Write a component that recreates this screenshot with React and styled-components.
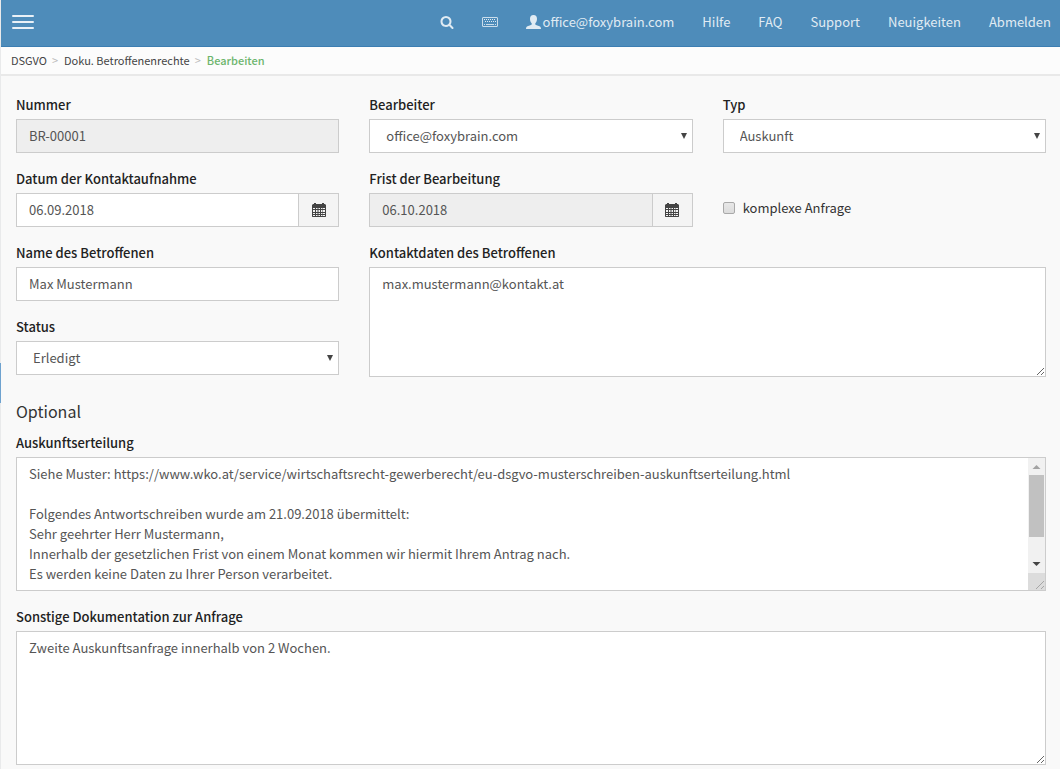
import React, { useLayoutEffect, useRef, useState } from 'react';
import styled, { createGlobalStyle } from 'styled-components';

const auskunft = `Siehe Muster: https://www.wko.at/service/wirtschaftsrecht-gewerberecht/eu-dsgvo-musterschreiben-auskunftserteilung.html

Folgendes Antwortschreiben wurde am 21.09.2018 übermittelt:
Sehr geehrter Herr Mustermann,
Innerhalb der gesetzlichen Frist von einem Monat kommen wir hiermit Ihrem Antrag nach.
Es werden keine Daten zu Ihrer Person verarbeitet.

`;

export default function App() {
    return (
        <>
        <GlobalStyle />
        <Page>
            <Rail><RailHandle /></Rail>
            <Content>
                <Navbar>
                    <MenuButton type="button" aria-label="Menü">
                        <Bar /><Bar /><Bar />
                    </MenuButton>
                    <Links>
                        <NavLink href="#suche" aria-label="Suche"><SearchIcon /></NavLink>
                        <NavLink href="#tastatur" aria-label="Tastatur"><KeyboardIcon /></NavLink>
                        <NavLink href="#profil"><UserIcon />office@foxybrain.com</NavLink>
                        <NavLink href="#hilfe">Hilfe</NavLink>
                        <NavLink href="#faq">FAQ</NavLink>
                        <NavLink href="#support">Support</NavLink>
                        <NavLink href="#neuigkeiten">Neuigkeiten</NavLink>
                        <NavLink href="#abmelden">Abmelden</NavLink>
                    </Links>
                </Navbar>
                <Breadcrumb aria-label="Breadcrumb">
                    <Crumb href="#dsgvo">DSGVO</Crumb>
                    <Separator>&gt;</Separator>
                    <Crumb href="#doku">Doku. Betroffenenrechte</Crumb>
                    <Separator>&gt;</Separator>
                    <Current>Bearbeiten</Current>
                </Breadcrumb>
                <Form>
                    <Row>
                        <Field>
                            <Label htmlFor="nummer">Nummer</Label>
                            <Input id="nummer" defaultValue="BR-00001" readOnly />
                        </Field>
                        <Field>
                            <Label htmlFor="bearbeiter">Bearbeiter</Label>
                            <Dropdown id="bearbeiter" options={['office@foxybrain.com']} />
                        </Field>
                        <Field>
                            <Label htmlFor="typ">Typ</Label>
                            <Dropdown id="typ" options={['Auskunft']} />
                        </Field>
                        <Field>
                            <Label htmlFor="datum">Datum der Kontaktaufnahme</Label>
                            <DateInput id="datum" defaultValue="06.09.2018" />
                        </Field>
                        <Field>
                            <Label htmlFor="frist">Frist der Bearbeitung</Label>
                            <DateInput id="frist" defaultValue="06.10.2018" readOnly />
                        </Field>
                        <CheckLabel>
                            <Checkbox type="checkbox" />
                            komplexe Anfrage
                        </CheckLabel>
                        <Stack>
                            <Field>
                                <Label htmlFor="name">Name des Betroffenen</Label>
                                <Input id="name" defaultValue="Max Mustermann" />
                            </Field>
                            <Field>
                                <Label htmlFor="status">Status</Label>
                                <Dropdown id="status" options={['Erledigt']} />
                            </Field>
                        </Stack>
                        <WideField>
                            <Label htmlFor="kontakt">Kontaktdaten des Betroffenen</Label>
                            <TextArea id="kontakt" $height={110} defaultValue="max.mustermann@kontakt.at" />
                        </WideField>
                    </Row>
                    <Heading>Optional</Heading>
                    <Stack>
                        <Field>
                            <Label htmlFor="auskunft">Auskunftserteilung</Label>
                            <ScrollArea id="auskunft" defaultValue={auskunft} />
                        </Field>
                        <Field>
                            <Label htmlFor="sonstige">Sonstige Dokumentation zur Anfrage</Label>
                            <TextArea id="sonstige" $height={134} defaultValue="Zweite Auskunftsanfrage innerhalb von 2 Wochen." />
                        </Field>
                    </Stack>
                </Form>
            </Content>
        </Page>
        </>
    )
}

function Dropdown({ id, options }) {
    return (
        <SelectWrap>
            <Select id={id}>
                {options.map((o) => <option key={o}>{o}</option>)}
            </Select>
            <Caret viewBox="0 0 6 6" aria-hidden="true"><path d="M0 0h6L3 6z" fill="#444" /></Caret>
        </SelectWrap>
    )
}

function DateInput(props) {
    return (
        <Group>
            <Input {...props} />
            <Addon type="button" aria-label="Kalender"><CalendarIcon /></Addon>
        </Group>
    )
}

// textarea with an always visible scrollbar
function ScrollArea(props) {
    const area = useRef(null);
    const [thumb, setThumb] = useState({ size: 100, top: 0 });

    const update = () => {
        const { clientHeight, scrollHeight, scrollTop } = area.current;
        setThumb({
            size: (clientHeight / scrollHeight) * 100,
            top: (scrollTop / scrollHeight) * 100,
        });
    };
    useLayoutEffect(update, []);

    return (
        <ScrollWrap>
            <ScrolledTextArea ref={area} $height={134} onScroll={update} onInput={update} {...props} />
            <Scrollbar aria-hidden="true">
                <Arrow viewBox="0 0 17 17"><path d="M8.500 7l4 4h-8z" fill="#a3a3a3" /></Arrow>
                <Track>
                    <Thumb style={{ height: `${thumb.size}%`, top: `${thumb.top}%` }} />
                </Track>
                <Arrow viewBox="0 0 17 17"><path d="M4.500 6h8l-4 4z" fill="#444" /></Arrow>
                <Corner viewBox="0 0 17 17"><path d="M8 16l8-8M13 16l3-3" stroke="#a6a6a6" /></Corner>
            </Scrollbar>
        </ScrollWrap>
    )
}

function SearchIcon() {
    return (
        <svg width="14" height="14" viewBox="0 0 1664 1792" fill="currentColor" aria-hidden="true">
            <path d="M1152 832q0-185-131.5-316.5t-316.5-131.5-316.5 131.5-131.5 316.5 131.5 316.5 316.5 131.5 316.5-131.5 131.5-316.5zm512 832q0 52-38 90t-90 38q-54 0-90-38l-343-342q-179 124-399 124-143 0-273.5-55.5t-225-150-150-225-55.5-273.5 55.5-273.5 150-225 225-150 273.5-55.5 273.5 55.5 225 150 150 225 55.5 273.5q0 220-124 399l343 343q37 37 37 90z" />
        </svg>
    )
}

function KeyboardIcon() {
    return (
        <svg width="16" height="10" viewBox="0 0 16 10" fill="none" stroke="currentColor" aria-hidden="true">
            <rect x=".5" y=".5" width="15" height="9" rx=".5" opacity=".85" />
            <path d="M2 2.500h12M3 4.500h11" strokeDasharray="1 1" />
            <path d="M2 7.500h1M4 7.500h8M13 7.500h1" opacity=".85" />
        </svg>
    )
}

function UserIcon() {
    return (
        <svg width="15" height="14" viewBox="0 0 15 14" fill="currentColor" aria-hidden="true">
            <path d="M7.500 0C9.900 0 11 1.600 11 3.800c0 1.900-.7 3.600-1.700 4.500v1.100c.3.6 3.600 1.300 4.700 2.200.7.6 1 1.300 1 2.400H0c0-1.100.3-1.800 1-2.400 1.100-.9 4.400-1.600 4.700-2.200V8.300C4.700 7.400 4 5.700 4 3.800 4 1.600 5.100 0 7.500 0z" />
        </svg>
    )
}

function CalendarIcon() {
    return (
        <svg width="14" height="14" viewBox="0 0 14 14" fill="#444" aria-hidden="true">
            <path d="M2 0h2v1h6V0h2v1h1l1 1v2H0V2l1-1h1z" />
            <path fillRule="evenodd" d="M0 4h14v9.500l-.5.5H.5l-.5-.5zM1 5v1h2V5zm3 0v1h1.500V5zm2.500 0v1H8V5zM9 5v1h1.500V5zm2 0v1H13V5zM1 7v2h2V7zm3 0v2h1.500V7zm2.500 0v2H8V7zM9 7v2h1.500V7zm2 0v2H13V7zM1 10v1h2v-1zm3 0v1h1.500v-1zm2.500 0v1H8v-1zM9 10v1h1.500v-1zm2 0v1H13v-1zM1 12v1h2v-1zm3 0v1h1.500v-1zm2.500 0v1H8v-1zM9 12v1h1.500v-1zm2 0v1H13v-1z" />
        </svg>
    )
}

const GlobalStyle = createGlobalStyle`
    * {
        box-sizing: border-box;
    }
    body {
        margin: 0;
        background: #f9f9f9;
        color: #333;
        font-family: "Noto Sans CJK SC", "Open Sans", sans-serif;
        font-size: 13px;
        line-height: 20px;
    }
    input, select, textarea, button {
        font: inherit;
        margin: 0;
    }
`;
const Page = styled.div`
    display: flex;
    min-height: 100vh;
`;
const Rail = styled.aside`
    width: 1px;
    background: #e9eaeb;
`;
const RailHandle = styled.div`
    height: 40px;
    margin-top: 363px;
    background: #6ea2cf;
`;
const Content = styled.div`
    flex: 1;
    min-width: 0;
`;
const Navbar = styled.header`
    display: flex;
    justify-content: space-between;
    align-items: center;
    height: 47px;
    padding: 0 9px 2px 11px;
    background: #4e8cba;
    border-bottom: 1px solid #3c7eb2;
`;
const MenuButton = styled.button`
    display: flex;
    flex-direction: column;
    gap: 4px;
    padding: 0;
    border: 0;
    background: none;
    cursor: pointer;
`;
const Bar = styled.span`
    width: 22px;
    height: 2px;
    border-radius: 1px;
    background: #e9f1f7;
`;
const Links = styled.nav`
    display: flex;
    align-items: center;
    gap: 28px;
`;
const NavLink = styled.a`
    display: flex;
    align-items: center;
    gap: 2px;
    color: #e0ebf3;
    text-decoration: none;
`;
const Breadcrumb = styled.nav`
    display: flex;
    align-items: center;
    height: 29px;
    padding: 0 10px 2px;
    background: #fcfcfc;
    border-bottom: 2px solid #e9e9e9;
    font-size: 11px;
`;
const Crumb = styled.a`
    color: #444;
    text-decoration: none;
`;
const Separator = styled.span`
    padding: 0 6px 0 5px;
    color: #bbb;
`;
const Current = styled.span`
    color: #6db56d;
    font-weight: 500;
`;
const Form = styled.form`
    padding: 19px 14px 0 15px;
`;
const Row = styled.div`
    display: grid;
    grid-template-columns: repeat(3, 1fr);
    gap: 16px 30px;
`;
const Field = styled.div`
    display: flex;
    flex-direction: column;
    gap: 4px;
    min-width: 0;
`;
const WideField = styled(Field)`
    grid-column: span 2;
`;
const Stack = styled.div`
    display: flex;
    flex-direction: column;
    gap: 16px;
`;
const Label = styled.label`
    color: #222;
    font-weight: 500;
`;
const Input = styled.input`
    width: 100%;
    min-width: 0;
    height: 34px;
    padding: 4px 12px 6px;
    border: 1px solid #ccc;
    border-radius: 0;
    background: ${(p) => (p.readOnly ? '#eee' : '#fff')};
    color: #555;
`;
const SelectWrap = styled.div`
    position: relative;
`;
const Select = styled.select`
    display: block;
    width: 100%;
    height: 34px;
    padding: 6px 16px;
    border: 1px solid #ccc;
    border-radius: 0;
    background: #fff;
    color: #555;
    appearance: none;
`;
const Caret = styled.svg`
    position: absolute;
    top: 14px;
    right: 6px;
    width: 6px;
    height: 6px;
    pointer-events: none;
`;
const Group = styled.div`
    display: flex;
`;
const Addon = styled.button`
    display: flex;
    flex: none;
    align-items: center;
    justify-content: center;
    width: 40px;
    padding: 0;
    border: 1px solid #ccc;
    border-left: 0;
    background: #f4f4f4;
`;
const CheckLabel = styled.label`
    display: flex;
    align-items: center;
    align-self: center;
    gap: 8px;
    padding-top: 20px;
`;
const Checkbox = styled.input`
    appearance: none;
    width: 12px;
    height: 12px;
    border: 1px solid #a9a9a9;
    border-radius: 2px;
    background: linear-gradient(#e8e8e8, #dcdcdc);

    &:checked {
        background: #4e8cba;
    }
`;
const TextArea = styled.textarea`
    display: block;
    width: 100%;
    height: ${(p) => p.$height}px;
    padding: 6px 12px;
    border: 1px solid #ccc;
    border-radius: 0;
    background: #fff;
    color: #555;
    resize: vertical;
`;
const ScrollWrap = styled.div`
    position: relative;
`;
const ScrolledTextArea = styled(TextArea)`
    padding-right: 29px;
    resize: none;
    scrollbar-width: none;
`;
const Scrollbar = styled.div`
    position: absolute;
    top: 1px;
    right: 1px;
    bottom: 1px;
    display: flex;
    flex-direction: column;
    width: 17px;
    background: #f1f1f1;
    pointer-events: none;
`;
const Arrow = styled.svg`
    flex: none;
    height: 17px;
`;
const Track = styled.div`
    position: relative;
    flex: 1;
`;
const Thumb = styled.div`
    position: absolute;
    left: 1px;
    right: 1px;
    background: #c1c1c1;
`;
const Corner = styled(Arrow)`
    background: #dcdcdc;
`;
const Heading = styled.h4`
    margin: 22px 0 10px;
    color: #333;
    font-size: 16px;
    font-weight: 400;
    line-height: 24px;
`;
